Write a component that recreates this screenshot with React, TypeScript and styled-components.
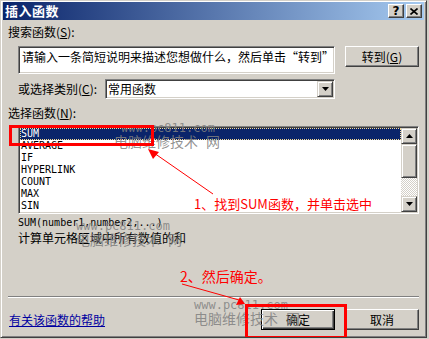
import React from 'react';
import styled, { createGlobalStyle } from 'styled-components';

const GlobalStyle = createGlobalStyle`
  html, body { margin: 0; padding: 0; background: #d4d0c8; }
  body { font-family: "Noto Sans CJK SC", "DejaVu Sans", sans-serif; font-size: 12px; color: #000; }
  * { box-sizing: border-box; }
`;

const CJK = `"Noto Sans CJK SC", "DejaVu Sans", sans-serif`;
const MONO = `"DejaVu Sans Mono", "Noto Sans CJK SC", monospace`;

const Win = styled.div`
  position: relative;
  width: 427px;
  height: 338px;
  background: #d4d0c8;
  border: 1px solid;
  border-color: #d4d0c8 #404040 #404040 #d4d0c8;
  box-shadow: inset 1px 1px #fff, inset -1px -1px #808080;
  padding: 1px 2px 2px 2px;
  display: flex;
  flex-direction: column;
  overflow: hidden;
`;

const TitleBar = styled.div`
  height: 18px;
  background: linear-gradient(to right, #0a246a, #a6caf0);
  display: flex;
  align-items: center;
  justify-content: space-between;
  padding: 0 2px 0 2px;
`;

const Title = styled.span`
  color: #fff;
  font: bold 13px/18px ${CJK};
  letter-spacing: 0.5px;
`;

const CaptionButtons = styled.div`
  display: flex;
  gap: 2px;
`;

const CaptionBtn = styled.div`
  width: 16px;
  height: 14px;
  background: #d4d0c8;
  border: 1px solid;
  border-color: #fff #404040 #404040 #fff;
  box-shadow: inset -1px -1px #808080;
  display: flex;
  align-items: center;
  justify-content: center;
  font: bold 12px/12px "DejaVu Sans", sans-serif;
`;

const Body = styled.div`
  display: flex;
  flex-direction: column;
  padding: 5px 5px 0 5px;
`;

const Label = styled.div<{ $indent?: number; $top?: number }>`
  height: 14px;
  line-height: 14px;
  margin-left: ${p => p.$indent ?? 0}px;
  margin-top: ${p => p.$top ?? 0}px;
  white-space: nowrap;
`;

const Row = styled.div<{ $top: number; $h: number }>`
  display: flex;
  align-items: flex-start;
  margin-left: 10px;
  margin-top: ${p => p.$top}px;
  height: ${p => p.$h}px;
`;

const Sunken = styled.div`
  border: 1px solid;
  border-color: #808080 #fff #fff #808080;
  box-shadow: inset 1px 1px #404040, inset -1px -1px #d4d0c8;
  padding: 1px;
  background: #fff;
`;

const SearchBox = styled(Sunken)`
  width: 317px;
  height: 28px;
  padding: 3px 3px;
  line-height: 14px;
  white-space: nowrap;
  overflow: hidden;
`;

const Button = styled.div<{ $w?: number; $default?: boolean }>`
  width: ${p => p.$w ?? 74}px;
  height: 21px;
  margin-left: 10px;
  background: #d4d0c8;
  border: 1px solid;
  border-color: ${p => (p.$default ? '#000' : '#fff #404040 #404040 #fff')};
  box-shadow: ${p =>
    p.$default
      ? 'inset 1px 1px #fff, inset -1px -1px #404040, inset -2px -2px #808080'
      : 'inset -1px -1px #808080'};
  display: flex;
  align-items: center;
  justify-content: center;
  line-height: 14px;
  white-space: nowrap;
`;

const CatLabel = styled.div`
  width: 87px;
  line-height: 20px;
  white-space: nowrap;
`;

const SelectBox = styled(Sunken)`
  width: 230px;
  height: 20px;
  display: flex;
  align-items: center;
`;

const SelectText = styled.div`
  flex: 1;
  padding-left: 1px;
  line-height: 16px;
`;

const DropBtn = styled.div`
  width: 16px;
  height: 16px;
  background: #d4d0c8;
  border: 1px solid;
  border-color: #d4d0c8 #404040 #404040 #d4d0c8;
  box-shadow: inset 1px 1px #fff, inset -1px -1px #808080;
  display: flex;
  align-items: center;
  justify-content: center;
`;

const ListBox = styled(Sunken)`
  margin-left: 10px;
  margin-top: 6px;
  width: 401px;
  height: 88px;
  display: flex;
`;

const Items = styled.div`
  flex: 1;
  background: #fff;
  overflow: hidden;
`;

const Item = styled.div<{ $sel?: boolean }>`
  height: 12px;
  line-height: 12px;
  padding-left: 1px;
  font: 10px/12px ${MONO};
  color: ${p => (p.$sel ? '#fff' : '#000')};
  background: ${p => (p.$sel ? '#0a246a' : 'transparent')};
  outline: ${p => (p.$sel ? '1px dotted #f5db95' : 'none')};
  outline-offset: -1px;
`;

const ScrollBar = styled.div`
  width: 16px;
  display: flex;
  flex-direction: column;
`;

const ScrollBtn = styled.div<{ $h: number }>`
  height: ${p => p.$h}px;
  background: #d4d0c8;
  border: 1px solid;
  border-color: #d4d0c8 #404040 #404040 #d4d0c8;
  box-shadow: inset 1px 1px #fff, inset -1px -1px #808080;
  display: flex;
  align-items: center;
  justify-content: center;
`;

const Track = styled.div`
  flex: 1;
  background: repeating-conic-gradient(#d4d0c8 0 25%, #fff 0 50%) 0 0 / 2px 2px;
`;

const Signature = styled.div`
  margin-left: 10px;
  margin-top: 3px;
  font: 10px/12px ${MONO};
`;

const Desc = styled.div`
  margin-left: 10px;
  margin-top: 2px;
  line-height: 14px;
`;

const Separator = styled.div`
  margin-top: 51px;
  height: 2px;
  border-top: 1px solid #808080;
  border-bottom: 1px solid #fff;
`;

const Footer = styled.div`
  margin-top: 11px;
  height: 21px;
  display: flex;
  align-items: center;
`;

const HelpLink = styled.a`
  margin-left: 1px;
  color: #0000a0;
  text-decoration: underline;
  line-height: 14px;
  flex: 1;
`;

const Overlay = styled.svg`
  position: absolute;
  left: 0;
  top: 0;
  pointer-events: none;
`;

const Note = styled.div<{ $x: number; $y: number; $size: number }>`
  position: absolute;
  left: ${p => p.$x}px;
  top: ${p => p.$y}px;
  color: #ff0000;
  font: ${p => p.$size}px/14px ${CJK};
  white-space: nowrap;
`;

const Watermark = styled.div<{ $x: number; $y: number }>`
  position: absolute;
  left: ${p => p.$x}px;
  top: ${p => p.$y}px;
  color: rgba(128, 128, 128, 0.85);
  pointer-events: none;
  white-space: nowrap;
`;

const WmUrl = styled.div<{ $dx: number }>`
  font: 12px/10px ${MONO};
  margin-left: ${p => p.$dx}px;
`;

const WmName = styled.div`
  font: 14px/15px ${CJK};
  margin-top: 1px;
`;

const WmGap = styled.span`
  margin-left: 8px;
`;

const Tri = ({ up }: { up?: boolean }) => (
  <svg width="7" height="4" viewBox="0 0 7 4">
    <polygon points={up ? '3.5,0 7,4 0,4' : '0,0 7,0 3.5,4'} fill="#000" />
  </svg>
);

const WM = ({ x, y, dx }: { x: number; y: number; dx: number }) => (
  <Watermark $x={x} $y={y}>
    <WmUrl $dx={dx}>www.pc811.com</WmUrl>
    <WmName>
      电脑维修技术<WmGap>网</WmGap>
    </WmName>
  </Watermark>
);

const items = ['SUM', 'AVERAGE', 'IF', 'HYPERLINK', 'COUNT', 'MAX', 'SIN'];

export default function App() {
  return (
    <>
      <GlobalStyle />
      <Win>
        <TitleBar>
          <Title>插入函数</Title>
          <CaptionButtons>
            <CaptionBtn>?</CaptionBtn>
            <CaptionBtn>
              <svg width="8" height="7" viewBox="0 0 8 7">
                <path d="M0.5 0.5 L7.5 6.5 M7.5 0.5 L0.5 6.5" stroke="#000" strokeWidth="1.6" />
              </svg>
            </CaptionBtn>
          </CaptionButtons>
        </TitleBar>
        <Body>
          <Label>
            搜索函数(<u>S</u>):
          </Label>
          <Row $top={7} $h={28}>
            <SearchBox>请输入一条简短说明来描述您想做什么，然后单击“转到”</SearchBox>
            <Button>
              转到(<u>G</u>)
            </Button>
          </Row>
          <Row $top={5} $h={20}>
            <CatLabel>
              或选择类别(<u>C</u>):
            </CatLabel>
            <SelectBox>
              <SelectText>常用函数</SelectText>
              <DropBtn>
                <Tri />
              </DropBtn>
            </SelectBox>
          </Row>
          <Label $top={7}>
            选择函数(<u>N</u>):
          </Label>
          <ListBox>
            <Items>
              {items.map((it, i) => (
                <Item key={it} $sel={i === 0}>
                  {it}
                </Item>
              ))}
            </Items>
            <ScrollBar>
              <ScrollBtn $h={16}>
                <Tri up />
              </ScrollBtn>
              <ScrollBtn $h={34} />
              <Track />
              <ScrollBtn $h={16}>
                <Tri />
              </ScrollBtn>
            </ScrollBar>
          </ListBox>
          <Signature>SUM(number1,number2,...)</Signature>
          <Desc>计算单元格区域中所有数值的和</Desc>
          <Separator />
          <Footer>
            <HelpLink>有关该函数的帮助</HelpLink>
            <Button $default>确定</Button>
            <Button>取消</Button>
          </Footer>
        </Body>

        <WM x={113} y={122} dx={7} />
        <WM x={75} y={220} dx={0} />
        <WM x={193} y={299} dx={0} />

        <Overlay width="429" height="339" viewBox="0 0 429 339">
          <rect x="9.5" y="125.5" width="142" height="18" fill="none" stroke="#ff0000" strokeWidth="3" />
          <line x1="212" y1="193" x2="153" y2="152" stroke="#ff0000" strokeWidth="1" />
          <polygon points="147,148 158,151 152,158" fill="#ff0000" />
          <rect x="245.5" y="304.5" width="99" height="32" fill="none" stroke="#ff0000" strokeWidth="3" />
          <line x1="181" y1="283" x2="238" y2="299" stroke="#ff0000" strokeWidth="1" />
          <polygon points="239,296 235,304 244,303" fill="#ff0000" />
        </Overlay>
        <Note $x={193} $y={196} $size={13}>1、找到SUM函数，并单击选中</Note>
        <Note $x={179} $y={268} $size={14}>2、然后确定。</Note>
      </Win>
    </>
  );
}
